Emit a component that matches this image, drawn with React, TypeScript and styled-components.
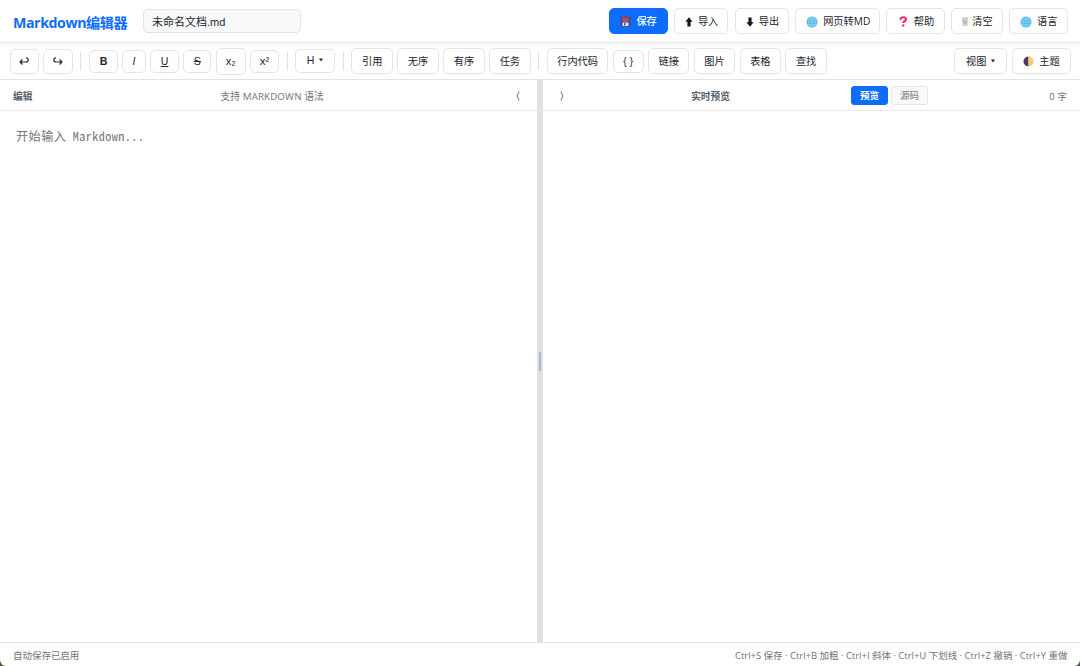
import React from "react";
import styled, { createGlobalStyle, css } from "styled-components";

const Global = createGlobalStyle`
  * { box-sizing: border-box; }
  body { margin: 0; background: #4a5738; }
  body, button, input { font-family: "Open Sans", "Noto Sans CJK SC", sans-serif; }
`;
const Window = styled.div`
  height: 666px; width: 1080px; display: flex; flex-direction: column;
  background: #fff; color: #212529; overflow: hidden; border-radius: 0 0 6px 6px;
`;
const Header = styled.header`
  flex: none; height: 43px; padding: 0 12.5px 0 13px; display: flex; align-items: center;
  border-bottom: 1px solid #e3e6e9; box-shadow: 0 1px 6px rgba(0,0,0,.07); position: relative;
`;
const Title = styled.h1`
  margin: 3px 0 0; width: 130px; font-size: 14.2px; letter-spacing: -.42px; line-height: 20px; font-weight: 700; color: #0d6efd; white-space: nowrap;
`;
const FileName = styled.input`
  width: 158px; height: 24px; padding: 0 8px; border: 1px solid #e0e4e8; border-radius: 5px;
  background: #f8f9fa; color: #212529; font: 11px "Liberation Sans", "Noto Sans CJK SC", sans-serif; outline: none;
`;
const Actions = styled.div`display: flex; gap: 6.2px; margin-left: auto;`;
const Button = styled.button<{ $w: number; $h?: number; $primary?: boolean; $gap?: number; $up?: number }>`
  flex: none; width: ${p => p.$w}px; height: ${p => p.$h ?? 26}px; padding: 0 0 ${p => p.$up ?? 0}px;
  display: inline-flex; align-items: center; justify-content: center; gap: ${p => p.$gap ?? 5}px;
  font-size: 10.2px; line-height: 14px; white-space: nowrap; color: #212529;
  background: #fff; border: 1px solid #e1e5e9; border-radius: 5px;
  ${p => p.$primary && css`background: #0d6efd; border-color: #0d6efd; color: #fff; font-weight: 500;`}
  svg { flex: none; display: block; }
`;
const ActionButton = styled(Button)`
  padding: 0 0 0 1px;
  svg { margin-top: 1px; }
`;
const Toolbar = styled.div`
  flex: none; height: 37px; display: flex; align-items: center; gap: 4.3px;
  padding: 0 9.5px; border-bottom: 1px solid #e1e4e7;
`;
const Separator = styled.i`flex: none; width: 1px; height: 18px; margin: 0 3.3px; background: #dee2e6;`;
const Spacer = styled.span`flex: 1;`;
const Latin = styled.span<{ $bold?: boolean; $italic?: boolean; $line?: string; $size?: number }>`
  font-family: "Liberation Sans", sans-serif; font-size: ${p => p.$size ?? 10.6}px;
  font-weight: ${p => p.$bold ? 700 : 400}; font-style: ${p => p.$italic ? "italic" : "normal"};
  text-decoration: ${p => p.$line ?? "none"};
`;
const Workspace = styled.main`flex: 1; min-height: 0; display: flex;`;
const Pane = styled.section`flex: 1; min-width: 0; display: flex; flex-direction: column;`;
const PaneHeader = styled.div`
  flex: none; height: 31px; padding: 3px 13px 0; display: flex; align-items: center; justify-content: space-between;
  border-bottom: 1px solid #e8eaec; font-size: 9.7px; line-height: 14px; color: #6c757d;
`;
const Strong = styled.span`font-weight: 700; color: #596068;`;
const Syntax = styled.span`letter-spacing: .16px;`;
const Collapse = styled.span`width: 12px; display: flex; justify-content: center; margin-top: -1px;`;
const Tabs = styled.div`display: flex; gap: 3px; margin: -3px 0 0;`;
const Tab = styled.button<{ $active?: boolean }>`
  width: 37px; height: 19px; padding: 1px 0 0; border-radius: 3px; border: 1px solid #e3e6e9;
  background: #f8f9fa; color: #6c757d; font-size: 9.5px; line-height: 15px;
  ${p => p.$active && css`background: #0d6efd; border-color: #0d6efd; color: #fff; font-weight: 700;`}
`;
const Count = styled.span`font-family: "Noto Sans CJK SC", sans-serif; font-size: 9.4px; word-spacing: 1px; margin-top: -1px;`;
const PreviewTitle = styled(Strong)`margin-left: 2px;`;
const Editor = styled.textarea`
  flex: 1; border: 0; outline: 0; resize: none; padding: 14px 16px; color: #212529; background: #fff;
  font: 300 12.2px/22px "Noto Sans Mono CJK SC", "Noto Sans CJK SC", monospace; letter-spacing: .4px;
  &::placeholder { color: #757575; opacity: 1; }
`;
const Splitter = styled.div`
  flex: none; width: 6px; background: #dee2e6; display: flex; align-items: center; justify-content: center;
  &::after { content: ""; width: 2px; height: 19px; border-radius: 1px; background: #adb5bd; }
`;
const Footer = styled.footer`
  flex: none; height: 24px; padding: 2px 12.5px 0 13px; display: flex; align-items: center; justify-content: space-between;
  border-top: 1px solid #e1e4e7; font-size: 9.48px; line-height: 14px; color: #6c757d;
`;

const Floppy = () => <svg width="11" height="11" viewBox="0 0 22 22"><path d="M2 1h17l2 2v18H3l-2-2V2z" fill="#55446f" /><path d="M5 1h12v10H5z" fill="#b05579" /><path d="M7 1h8v4H7z" fill="#6f4770" /><path d="M5 13h12v7H5z" fill="#e3e5f0" /><path d="M8 14h3v5H8z" fill="#57537c" /></svg>;
const Arrow = ({ down }: { down?: boolean }) => <svg width="8" height="10" viewBox="0 0 8 10"><path transform={down ? "rotate(180 4 5)" : undefined} d="M4 .3 7.6 4.8H5.6v4.8H2.4V4.8H.4z" fill="#16191c" /></svg>;
const Globe = () => <svg width="12" height="12" viewBox="0 0 24 24"><circle cx="12" cy="12" r="11" fill="#4db7ee" /><path d="M12 1v22M1 12h22M3 6.5h18M3 17.5h18M12 1C3 7 3 17 12 23M12 1c9 6 9 16 0 22" fill="none" stroke="#a5dcf5" strokeWidth="1.3" /></svg>;
const Question = () => <svg width="11" height="11" viewBox="0 0 24 24"><path d="M5.5 8c0-7 13-7 12-.5-.5 4-6 4-6 8" fill="none" stroke="#ee3158" strokeWidth="4.8" /><circle cx="11.5" cy="20.5" r="2.7" fill="#ee3158" /></svg>;
const Bin = () => <svg width="6" height="9" viewBox="0 0 12 18"><path d="M1 3h10L10 17H2z" fill="#eee9ea" stroke="#a8a2a5" strokeWidth="1" /><path d="M0 2h12M4 5v10M6 5v10M8 5v10M2 8h8M2 12h8" stroke="#a79ca0" strokeWidth="1.1" /></svg>;
const Moon = () => <svg width="11" height="11" viewBox="0 0 22 22"><path d="M11 1a10 10 0 0 0 0 20z" fill="#493961" /><path d="M11 1a10 10 0 0 1 0 20z" fill="#f7c96d" /><circle cx="15" cy="8" r="2" fill="#ffdc83" /></svg>;
const Turn = ({ redo }: { redo?: boolean }) => <svg width="10" height="8" viewBox="0 0 10 8"><g transform={redo ? "translate(10 0) scale(-1 1)" : undefined} fill="none" stroke="#212529" strokeWidth="1.15"><path d="M7 .8C10 1 9.7 5 7 5H1M3.5 2.5 1 5l2.5 2.5" /></g></svg>;
const Caret = () => <svg width="4" height="5" viewBox="0 0 4 5"><path d="M0 .5h4L2 3.5z" fill="#212529" /></svg>;
const Angle = ({ right }: { right?: boolean }) => <svg width="4" height="10" viewBox="0 0 4 10"><path d={right ? "M.8.5 3 5 .8 9.5" : "M3.2.5 1 5l2.2 4.5"} fill="none" stroke="#6c757d" /></svg>;

export default function App() {
  return <><Global /><Window>
    <Header>
      <Title>Markdown编辑器</Title><FileName defaultValue="未命名文档.md" />
      <Actions>
        <ActionButton $w={58.8} $primary><Floppy />保存</ActionButton>
        <ActionButton $w={54.8}><Arrow />导入</ActionButton>
        <ActionButton $w={54.6}><Arrow down />导出</ActionButton>
        <ActionButton $w={84.6}><Globe />网页转MD</ActionButton>
        <ActionButton $w={58.6}><Question />帮助</ActionButton>
        <ActionButton $w={51.8} $gap={4}><Bin />清空</ActionButton>
        <ActionButton $w={58.5}><Globe />语言</ActionButton>
      </Actions>
    </Header>
    <Toolbar>
      <Button $w={29.5} $h={25}><Turn /></Button>
      <Button $w={29.5} $h={25}><Turn redo /></Button>
      <Separator />
      <Button $w={29} $h={23}><Latin $bold>B</Latin></Button>
      <Button $w={23.5} $h={23}><Latin $italic>I</Latin></Button>
      <Button $w={29} $h={23}><Latin $line="underline">U</Latin></Button>
      <Button $w={28} $h={23}><Latin $line="line-through">S</Latin></Button>
      <Button $w={30} $h={27} $up={1}><Latin $size={11}>x₂</Latin></Button>
      <Button $w={29} $h={23}><Latin $size={11.5}>x²</Latin></Button>
      <Separator />
      <Button $w={40} $h={24} $up={2}><Latin>H</Latin><Caret /></Button>
      <Separator />
      <Button $w={41.6}>引用</Button><Button $w={41.6}>无序</Button><Button $w={41.6}>有序</Button><Button $w={41.6}>任务</Button>
      <Separator />
      <Button $w={61.6}>行内代码</Button>
      <Button $w={31} $h={23}>{"{ }"}</Button>
      <Button $w={41.5}>链接</Button><Button $w={41.5}>图片</Button><Button $w={41.5}>表格</Button><Button $w={41.5}>查找</Button>
      <Spacer />
      <Button $w={53}>视图<Caret /></Button><ActionButton $w={59}><Moon />主题</ActionButton>
    </Toolbar>
    <Workspace>
      <Pane>
        <PaneHeader><Strong>编辑</Strong><Syntax>支持 MARKDOWN 语法</Syntax><Collapse><Angle /></Collapse></PaneHeader>
        <Editor placeholder="开始输入 Markdown..." />
      </Pane>
      <Splitter />
      <Pane>
        <PaneHeader><Collapse><Angle right /></Collapse><PreviewTitle>实时预览</PreviewTitle><Tabs><Tab $active>预览</Tab><Tab>源码</Tab></Tabs><Count>0 字</Count></PaneHeader>
      </Pane>
    </Workspace>
    <Footer><span>自动保存已启用</span><span>Ctrl+S 保存 · Ctrl+B 加粗 · Ctrl+I 斜体 · Ctrl+U 下划线 · Ctrl+Z 撤销 · Ctrl+Y 重做</span></Footer>
  </Window></>;
}
